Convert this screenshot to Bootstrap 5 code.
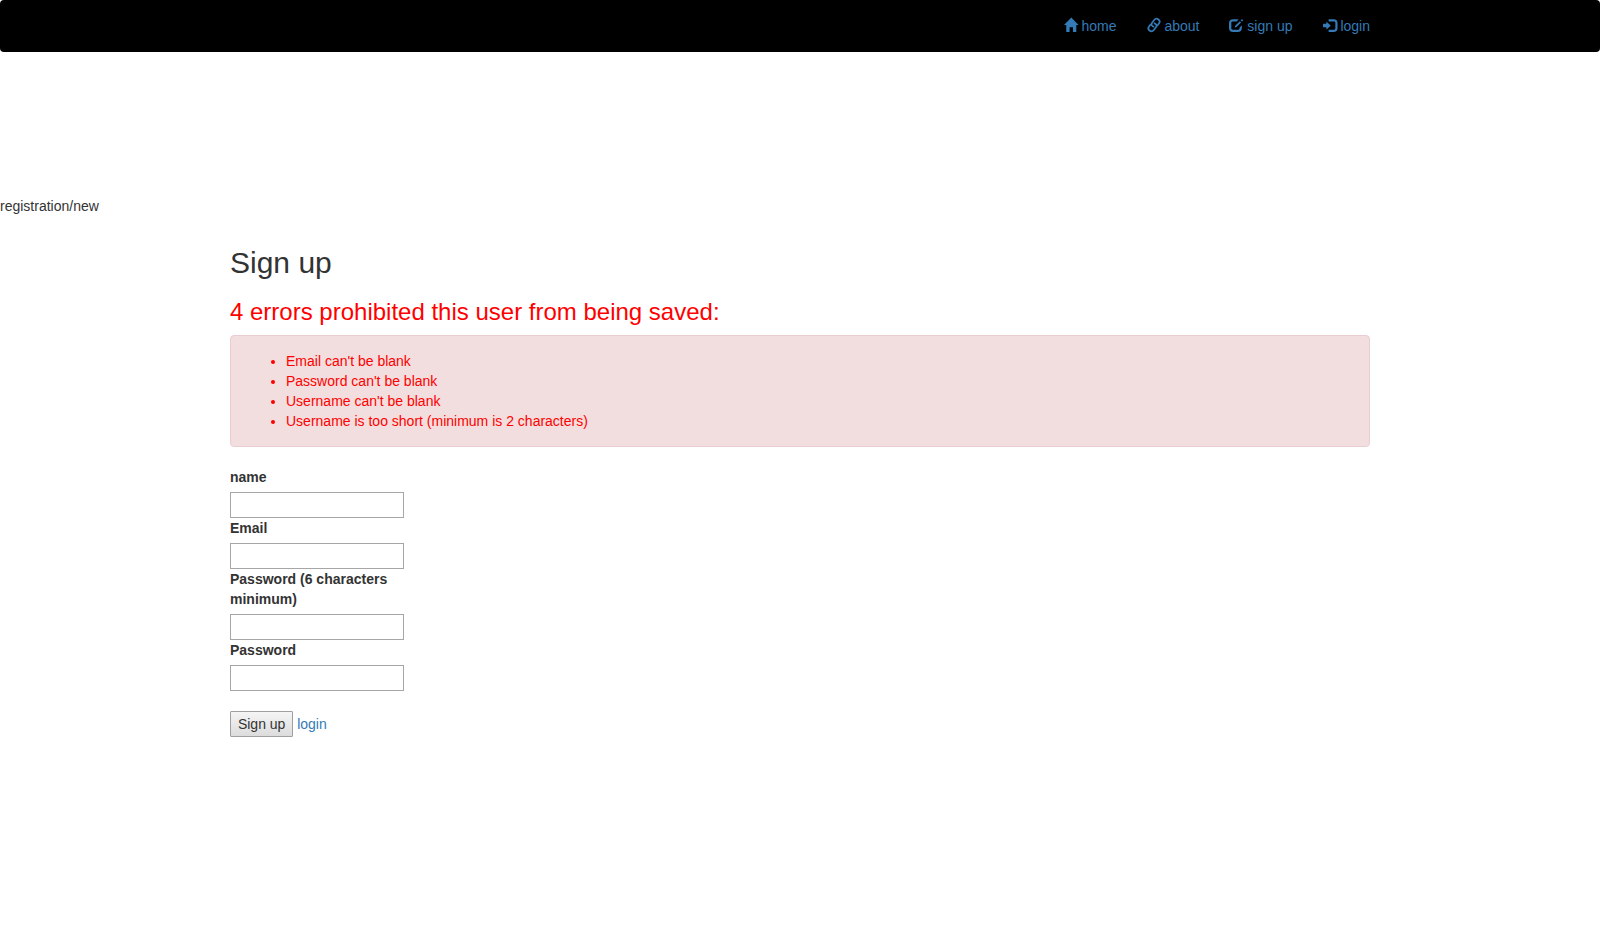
<!DOCTYPE html>
<html lang="en">
<head>
<meta charset="utf-8">
<title>Sign up</title>
<meta name="viewport" content="width=device-width, initial-scale=1">
<link href="https://cdn.jsdelivr.net/npm/bootstrap@5.3.0/dist/css/bootstrap.min.css" rel="stylesheet">
<style>
body{font-family:"Liberation Sans",Arial,sans-serif;font-size:14px;line-height:20px;color:#333}
a{color:#337ab7;text-decoration:none}
.page-wrap{width:1170px;max-width:100%;padding:0 15px;margin:0 auto}
.top-nav{height:52px;padding:0;background:#000;border-radius:4px;margin-bottom:144px}
.top-nav .nav-link{padding:0;color:#337ab7;line-height:20px}
.top-nav .nav{gap:30px}
.glyph{width:14px;height:14px;overflow:visible;fill:currentColor;margin-right:3.9px;margin-bottom:2px;flex:none}
h2{font-size:30px;line-height:33px;margin:30px 0 20px}
h3{font-size:24px;line-height:26.4px;margin:0 0 10px;color:red}
.error-box{color:red;background:#f2dede;border:1px solid #ebccd1;border-radius:4px;padding:15px;margin-bottom:20px}
.error-box ul{padding-left:40px}
.signup-form{width:174px}
.signup-form label{display:block;font-weight:bold;margin-bottom:5px}
.signup-form .form-control{height:26px;padding:0 3px;border:1px solid #a6a6a6;border-radius:0;font-size:14px}
.form-foot{margin-top:20px;gap:3.9px}
.submit-btn{width:63.3px;height:26px;padding:0;font-size:14px;line-height:24px;color:#333;border:1px solid #a0a0a0;border-radius:1px;background:linear-gradient(#f5f5f5,#dcdcdc)}
</style>
<script src="https://cdn.jsdelivr.net/npm/bootstrap@5.3.0/dist/js/bootstrap.bundle.min.js" defer></script>
</head>
<body>
<nav class="navbar top-nav">
  <div class="page-wrap">
    <ul class="nav justify-content-end">
      <li class="nav-item"><a class="nav-link d-flex align-items-center" href="#"><svg class="glyph" viewBox="0 0 1200 1200"><path transform="matrix(.96 0 0 -1 0 1200)" d="M18 618l620 608q8 7 18.500 7t17.500-7l608-608q8-8 5.500-13t-12.500-5h-175v-575q0-10-7.500-17.500t-17.500-7.500h-250q-10 0-17.500 7.500t-7.500 17.500v375h-300v-375q0-10-7.500-17.500t-17.500-7.500h-250q-10 0-17.500 7.500t-7.500 17.500v575h-175q-10 0-12.500 5t5.500 13z"/></svg>home</a></li>
      <li class="nav-item"><a class="nav-link d-flex align-items-center" href="#"><svg class="glyph" viewBox="0 0 14 14"><g fill="none" stroke="currentColor" stroke-width="1.700" stroke-linecap="butt"><path d="M7.200 8.900C4.800 8.400 3.900 6.600 4.900 5L7.200 2C8.400.5 10.100.4 11.500 1.500C12.900 2.600 13 4.200 12 5.500L10 8.100"/><path d="M6.800 5.100C9.200 5.600 10.100 7.400 9.100 9L6.800 12C5.600 13.500 3.900 13.600 2.500 12.500C1.100 11.400 1 9.800 2 8.500L4 5.900"/></g></svg>about</a></li>
      <li class="nav-item"><a class="nav-link d-flex align-items-center" href="#"><svg class="glyph" viewBox="0 0 1200 1200"><path transform="matrix(1 0 0 -1 0 1200)" d="M350 1100h350q60 0 127-23l-178-177h-349q-41 0-70.500-29.500t-29.500-70.500v-500q0-41 29.500-70.500t70.500-29.500h500q41 0 70.500 29.500t29.500 70.500v69l200 200v-219q0-165-92.500-257.500t-257.500-92.500h-400q-165 0-257.500 92.500t-92.500 257.500v400q0 165 92.500 257.500t257.500 92.500zM490 380l40 150 400 400 110-110-400-400zM1000 1000l95 95q15 15 30 0l80-80q15-15 0-30l-95-95z"/></svg>sign up</a></li>
      <li class="nav-item"><a class="nav-link d-flex align-items-center" href="#"><svg class="glyph" viewBox="0 0 1200 1200"><path transform="matrix(.96 0 0 -1 0 1200)" d="M550 1100h400q165 0 257.500-92.500t92.500-257.500v-400q0-165-92.500-257.500t-257.500-92.500h-400q-21 0-35.500 14.500t-14.500 35.500v100q0 21 14.500 35.500t35.500 14.500h450q41 0 70.500 29.500t29.500 70.500v500q0 41-29.500 70.500t-70.500 29.500h-450q-21 0-35.500 14.500t-14.500 35.500v100q0 21 14.500 35.500t35.500 14.500zM338 867l324-284q16-14 16-33t-16-33l-324-284q-16-14-27-9t-11 26v150h-250q-21 0-35.500 14.500t-14.500 35.500v200q0 21 14.500 35.500t35.500 14.500h250v150q0 21 11 26t27-9z"/></svg>login</a></li>
    </ul>
  </div>
</nav>
<div>registration/new</div>
<main class="page-wrap">
  <h2>Sign up</h2>
  <h3>4 errors prohibited this user from being saved:</h3>
  <div class="error-box">
    <ul class="mb-0">
      <li>Email can't be blank</li>
      <li>Password can't be blank</li>
      <li>Username can't be blank</li>
      <li>Username is too short (minimum is 2 characters)</li>
    </ul>
  </div>
  <form class="signup-form">
    <label for="name">name</label>
    <input class="form-control" id="name" type="text">
    <label for="email">Email</label>
    <input class="form-control" id="email" type="email">
    <label for="pw">Password (6 characters minimum)</label>
    <input class="form-control" id="pw" type="password">
    <label for="pw2">Password</label>
    <input class="form-control" id="pw2" type="password">
    <div class="d-flex align-items-center form-foot">
      <button class="btn submit-btn" type="button">Sign up</button>
      <a href="#">login</a>
    </div>
  </form>
</main>
</body>
</html>
